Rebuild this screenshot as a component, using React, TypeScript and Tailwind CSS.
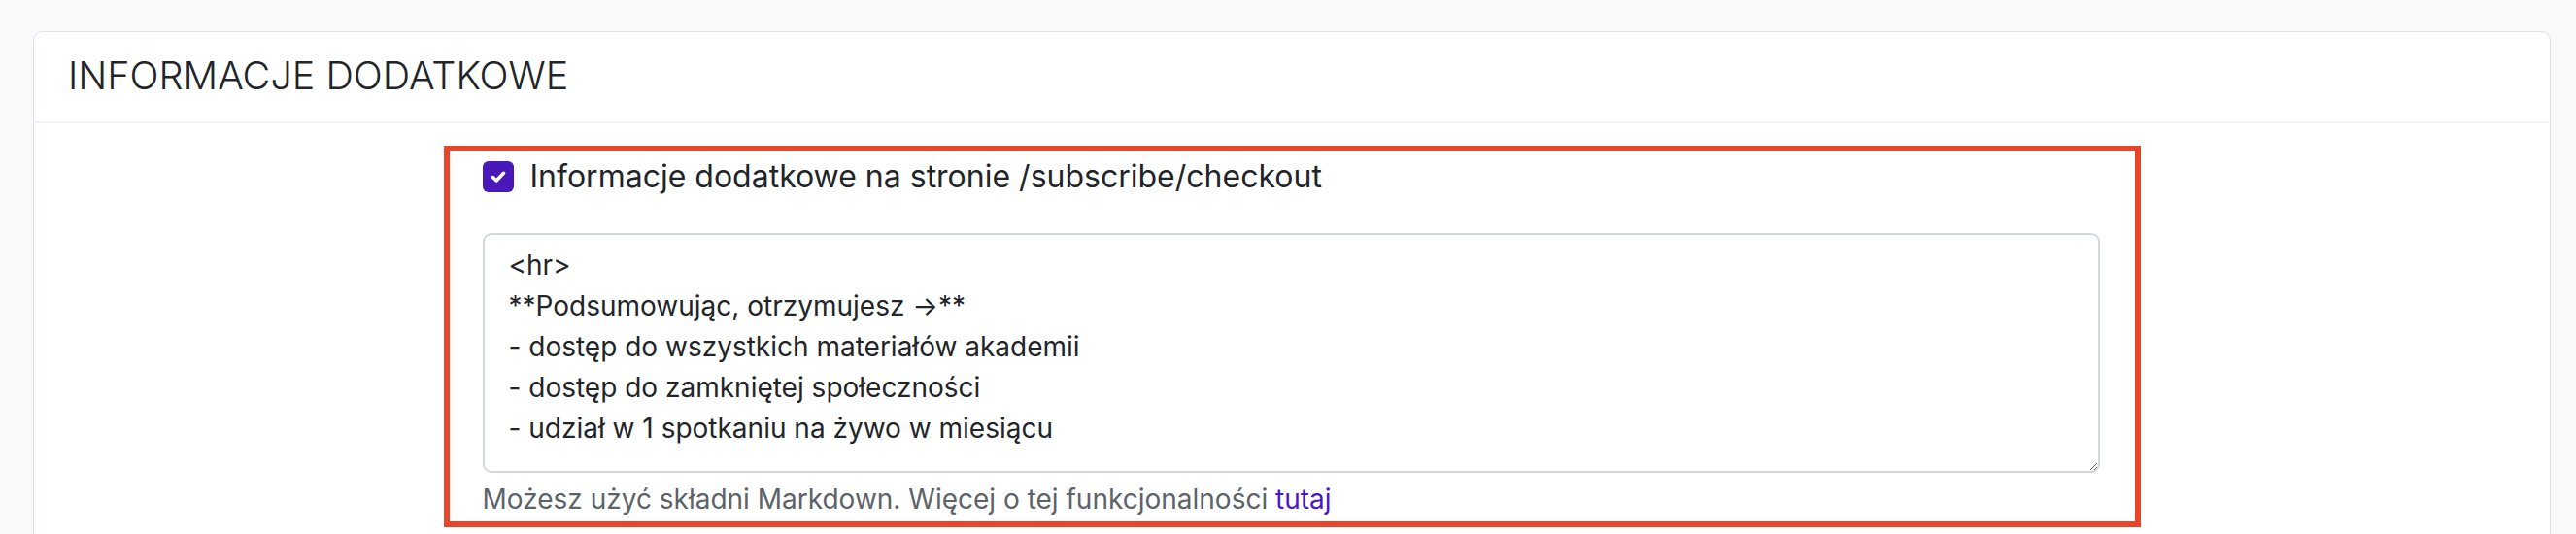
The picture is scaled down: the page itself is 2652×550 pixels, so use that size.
import React from "react";

const textValue = `<hr>
**Podsumowując, otrzymujesz →**
- dostęp do wszystkich materiałów akademii
- dostęp do zamkniętej społeczności
- udział w 1 spotkaniu na żywo w miesiącu`;

const App = () => {
  return (
    <div
      className="w-[2652px] h-[550px] overflow-hidden bg-[#f8f9fa] pt-[32px] pl-[34px] pr-[26px]"
      style={{ fontFamily: "Inter, 'Noto Sans', sans-serif" }}
    >
      <div className="bg-white border border-[#dee2e6] rounded-[10px] h-[600px]">
        {/* Header */}
        <div className="h-[94px] flex items-center px-[35px] border-b-2 border-[#f1f2f3]">
          <h2 className="text-[39.5px] font-light text-[#212529]">
            INFORMACJE DODATKOWE
          </h2>
        </div>

        {/* Body */}
        <div className="flex justify-center pt-[23px]">
          <div className="w-[1747px] border-[6px] border-[#e8452a] pl-[34px] pr-[36px] pt-[6px] pb-[3px]">
            <label className="flex items-center gap-[17px] leading-[40px]">
              <span className="w-[32px] h-[32px] rounded-[6px] bg-[#4a17b9] flex items-center justify-center">
                <svg width="20" height="20" viewBox="0 0 16 16" fill="none">
                  <path
                    d="M3.6 8.4l2.9 2.8 5.9-6.2"
                    stroke="white"
                    strokeWidth="2.8"
                    strokeLinecap="round"
                    strokeLinejoin="round"
                  />
                </svg>
              </span>
              <span className="text-[32px] text-[#212529]">
                Informacje dodatkowe na stronie /subscribe/checkout
              </span>
            </label>

            <textarea
              className="mt-[38px] block w-full h-[247px] border-2 border-[#d3d8dd] rounded-[9px] px-[25px] pt-[10px] text-[28px] leading-[42px] text-[#212529] outline-none resize-y"
              defaultValue={textValue}
            />

            <p className="mt-[7px] text-[28px] leading-[40px] text-[#5c636a]">
              Możesz użyć składni Markdown. Więcej o tej funkcjonalności{" "}
              <a href="#" className="text-[#4a17c4]">
                tutaj
              </a>
            </p>
          </div>
        </div>
      </div>
    </div>
  );
};

export default App;
